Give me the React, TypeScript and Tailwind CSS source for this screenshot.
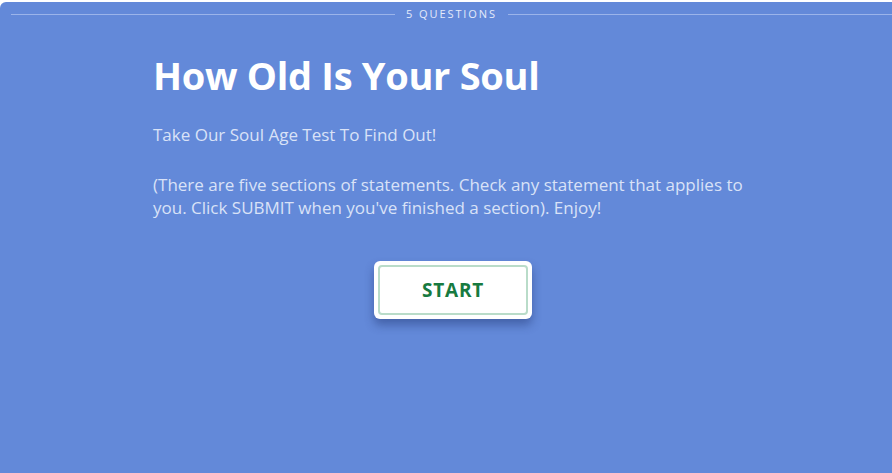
export default function App() {
  return (
    <div className="w-[892px] h-[473px] bg-white overflow-hidden" style={{ fontFamily: '"Open Sans", Lato, sans-serif' }}>
      <div className="mt-[2px] h-[471px] bg-[#6389d9] rounded-tl-[6px]">
        {/* question count */}
        <div className="flex items-center pt-[6px] pl-[11px]">
          <div className="flex-1 h-px bg-[#9bb4ea]" />
          <span className="px-[11px] text-[11px] tracking-[1.9px] text-[#e3eaf9] leading-[12px]">5 QUESTIONS</span>
          <div className="flex-1 h-px bg-[#9bb4ea]" />
        </div>

        <div className="ml-[153px] w-[600px]">
          <h1 className="mt-[33px] text-[38px] font-bold text-white leading-[44px] tracking-[-0.3px]">How Old Is Your Soul</h1>
          <p className="mt-[26px] text-[17px] leading-[23px] text-[#d9e2f7]">Take Our Soul Age Test To Find Out!</p>
          <p className="mt-[27px] text-[17px] leading-[23px] text-[#d9e2f7]">
            (There are five sections of statements. Check any statement that applies to you. Click SUBMIT when you've finished a section). Enjoy!
          </p>
          <div className="flex justify-center mt-[42px]">
            <button className="w-[158px] h-[58px] bg-white rounded-[6px] p-[4px] shadow-[0_6px_10px_rgba(30,50,110,0.45)]">
              <div className="h-full w-full border-2 border-[#b9dcc9] rounded-[4px] flex items-center justify-center">
                <span className="text-[19px] font-bold text-[#177a40] tracking-[0.8px]">START</span>
              </div>
            </button>
          </div>
        </div>
      </div>
    </div>
  );
}
